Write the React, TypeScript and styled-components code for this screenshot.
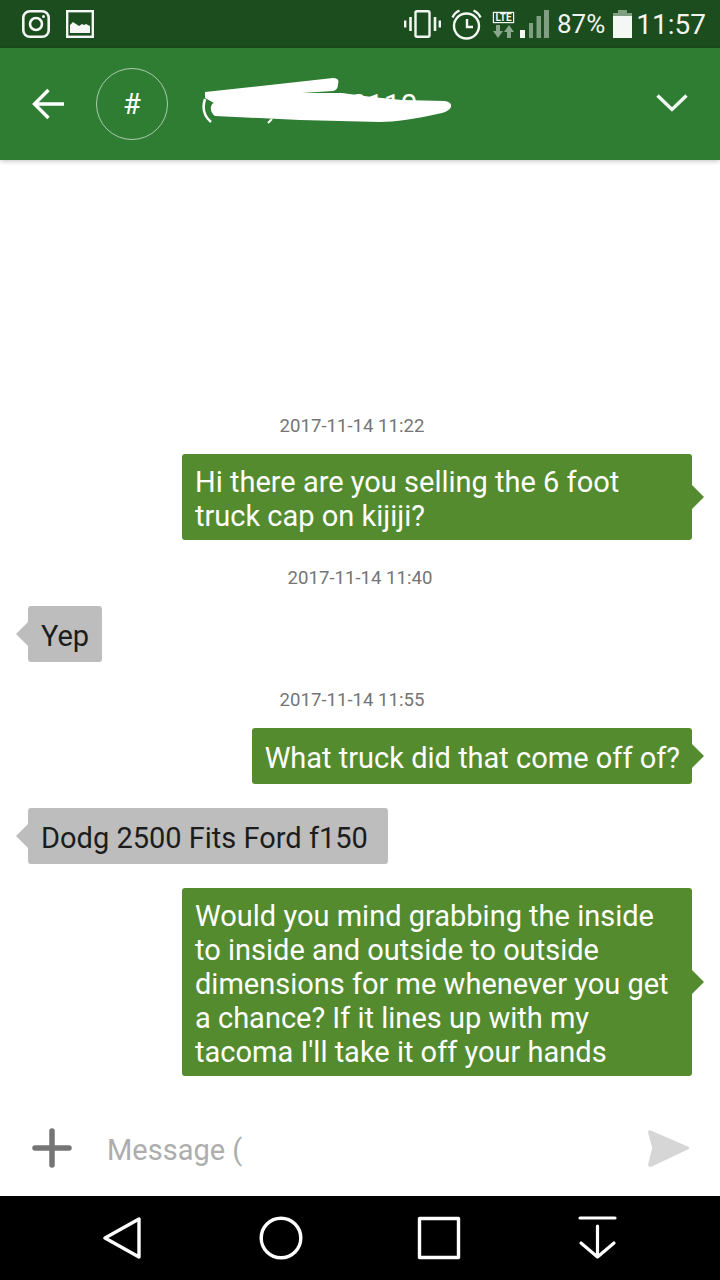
import styled, { createGlobalStyle } from 'styled-components';

const Global = createGlobalStyle`
  html, body {
    margin: 0;
    padding: 0;
    background: #fff;
  }
  * {
    box-sizing: border-box;
  }
`;

const Screen = styled.div`
  width: 720px;
  height: 1280px;
  display: flex;
  flex-direction: column;
  overflow: hidden;
  font-family: Roboto, 'Liberation Sans', sans-serif;
`;

const StatusBar = styled.div`
  height: 48px;
  flex: none;
  display: flex;
  align-items: center;
  padding: 0 14px 0 22px;
  background: #1b4d1e;
  color: #f1f5f1;
`;

const StatusLeft = styled.div`
  display: flex;
  align-items: center;
  gap: 16px;
  flex: 1;
`;

const StatusRight = styled.div`
  display: flex;
  align-items: center;
`;

const Percent = styled.span`
  font-size: 26px;
  margin: 0 8px 0 8px;
`;

const Clock = styled.span`
  font-size: 28px;
  margin-left: 4px;
`;

const Header = styled.header`
  height: 112px;
  flex: none;
  display: flex;
  align-items: center;
  padding: 0 32px;
  background: #2e7d32;
  box-shadow: 0 1px 5px rgba(0, 0, 0, 0.25);
  position: relative;
  z-index: 1;
`;

const Avatar = styled.div`
  width: 72px;
  height: 72px;
  margin: 0 34px 0 32px;
  flex: none;
  display: flex;
  align-items: center;
  justify-content: center;
  border: 1px solid rgba(255, 255, 255, 0.6);
  border-radius: 50%;
  color: #fff;
  font-size: 29px;
`;

const Name = styled.div`
  flex: 1;
  height: 60px;
  position: relative;
  display: flex;
  align-items: center;
  padding-left: 148px;
  color: #fff;
  font-size: 30px;
`;

const Scribble = styled.svg`
  position: absolute;
  left: 0;
  top: 0;
`;

const Messages = styled.main`
  flex: 1;
  min-height: 0;
  display: flex;
  flex-direction: column;
  justify-content: flex-end;
  padding: 0 28px 28px;
  background: #fff;
`;

const Stamp = styled.div<{ $shift?: boolean }>`
  height: 24px;
  margin: 25px 0 17px;
  padding-right: ${(p) => (p.$shift ? 16 : 0)}px;
  text-align: center;
  font-size: 18.6px;
  line-height: 27px;
  color: #757575;
`;

const Bubble = styled.div<{ $mine?: boolean; $trail?: number }>`
  position: relative;
  max-width: 510px;
  min-height: 56px;
  display: flex;
  align-items: center;
  padding: 11px ${(p) => p.$trail ?? 13}px 7px 13px;
  border-radius: 3px;
  font-size: 29px;
  line-height: 34px;
  align-self: ${(p) => (p.$mine ? 'flex-end' : 'flex-start')};
  background: ${(p) => (p.$mine ? '#558b2f' : '#bdbdbd')};
  color: ${(p) => (p.$mine ? '#fff' : '#1c1c1c')};

  & + & {
    margin-top: 24px;
  }

  &::after {
    content: '';
    position: absolute;
    top: 50%;
    transform: translateY(-50%);
    border-style: solid;
    border-color: transparent;
    border-width: 12px;
    ${(p) =>
      p.$mine
        ? 'left: 100%; border-right-width: 0; border-left-color: #558b2f;'
        : 'right: 100%; border-left-width: 0; border-right-color: #bdbdbd;'}
  }
`;

const InputBar = styled.div`
  height: 92px;
  flex: none;
  display: flex;
  align-items: center;
  padding: 0 30px 0 32px;
  background: #fff;
`;

const Placeholder = styled.div`
  flex: 1;
  margin-left: 35px;
  font-size: 29px;
  color: #adadad;
`;

const NavBar = styled.nav`
  height: 84px;
  flex: none;
  display: grid;
  grid-template-columns: repeat(4, 158.5px);
  padding-left: 43px;
  align-items: center;
  background: #000;
`;

const NavSlot = styled.div`
  display: flex;
  justify-content: center;
`;

const InstagramIcon = () => (
  <svg width="28" height="28" viewBox="0 0 28 28" fill="none" stroke="#f4f7f4" strokeWidth="2.6">
    <rect x="1.3" y="1.3" width="25.4" height="25.4" rx="6.5" />
    <circle cx="14" cy="14" r="6" />
    <circle cx="21.5" cy="6.5" r="1.5" fill="#f4f7f4" stroke="none" />
  </svg>
);

const ImageIcon = () => (
  <svg width="28" height="28" viewBox="0 0 28 28">
    <rect x="1.2" y="1.2" width="25.6" height="25.6" fill="none" stroke="#f4f7f4" strokeWidth="2.4" />
    <path d="M4 23V15l3-3 3 2 3 2 3-2 2 1 2-1 4 2v7z" fill="#f4f7f4" />
  </svg>
);

const VibrateIcon = () => (
  <svg width="37" height="28" viewBox="0 0 37 28" fill="none" stroke="#f4f7f4">
    <rect x="11.5" y="1.2" width="14" height="25.6" rx="1.5" strokeWidth="2.4" />
    <path d="M6.5 7v14M31 7v14" strokeWidth="2.6" />
    <path d="M1.2 10.5v7M35.8 10.5v7" strokeWidth="2.4" />
  </svg>
);

const AlarmIcon = () => (
  <svg width="31" height="31" viewBox="0 0 31 31" fill="none" stroke="#f4f7f4" strokeWidth="2.4" style={{ marginLeft: 10 }}>
    <circle cx="15.5" cy="17" r="12.5" />
    <path d="M16 10v8h6" />
    <path d="M1.5 8.5C3 5 5.5 2.8 8.5 1.5M22.5 1.5c3 1.3 5.500 3.500 7 7" />
  </svg>
);

const LteIcon = () => (
  <svg width="23" height="27" viewBox="0 0 23 27" style={{ marginLeft: 10 }}>
    <rect x="0.8" y="0.8" width="21.4" height="11.4" fill="#f4f7f4" />
    <rect x="2" y="2" width="19" height="9" fill="#1b4d1e" />
    <text x="11.5" y="10.2" textAnchor="middle" fontFamily="Roboto, sans-serif" fontSize="10" fontWeight="700" fill="#f4f7f4">
      LTE
    </text>
    <path d="M4 14v6H1l5 7 5-7H8v-6zM17 14l-5 7h3v6h4v-6h3z" fill="#8aa88b" />
  </svg>
);

const SignalIcon = () => (
  <svg width="29" height="28" viewBox="0 0 29 28" style={{ marginLeft: 5 }}>
    <rect x="0" y="20" width="5" height="8" fill="#f4f7f4" />
    <rect x="9" y="13" width="4" height="15" fill="#7f9f80" />
    <rect x="16.500" y="6" width="4.500" height="22" fill="#7f9f80" />
    <rect x="24" y="0" width="5" height="28" fill="#7f9f80" />
  </svg>
);

const BatteryIcon = () => (
  <svg width="19" height="28" viewBox="0 0 19 28">
    <path d="M5 0h9v3H5z" fill="#7f9f80" />
    <path d="M0 3h19v3H0z" fill="#7f9f80" />
    <rect x="0" y="6" width="19" height="22" fill="#f4f7f4" />
  </svg>
);

const BackIcon = () => (
  <svg width="32" height="32" viewBox="0 0 32 32" fill="none" stroke="#fff" strokeWidth="3.4">
    <path d="M32 16H3M16.500 2L2.500 16l14 14" />
  </svg>
);

const ChevronIcon = () => (
  <svg width="32" height="18" viewBox="0 0 32 18" fill="none" stroke="#f2f7f2" strokeWidth="3.4" style={{ marginTop: -2 }}>
    <path d="M1.500 1.500L16 15.500 30.500 1.500" />
  </svg>
);

const ScribbleMark = () => (
  <Scribble width="252" height="60" viewBox="0 0 252 60">
    <path
      d="M3 18L131 4Q138 4 136 10Q136 16 131 17L100 19L140 19L170 23L200 26L243 27Q250 28 249 33Q247 37 240 39Q200 48 178 48L98 46L13 42Q8 38 9 33Q10 29 12 29L3 24Z"
      fill="#fff"
    />
    <path d="M3 25C0 34 2 42 9 48" stroke="#fff" strokeWidth="2.500" fill="none" />
    <path d="M70 45L66 49" stroke="#fff" strokeWidth="2" fill="none" />
  </Scribble>
);

const PlusIcon = () => (
  <svg width="40" height="40" viewBox="0 0 40 40" stroke="#757575" strokeWidth="5.500" strokeLinecap="round" style={{ marginTop: -4 }}>
    <path d="M20 3v34M3 20h34" />
  </svg>
);

const SendIcon = () => (
  <svg width="42" height="40" viewBox="0 0 42 40" style={{ marginTop: -4 }}>
    <path d="M2 3L40 19.500Q41 20 40 20.500L3 38Q0.500 38.500 1 36L5 20 1 5Q0.500 2.500 2 3Z" fill="#d6d6d6" stroke="#d6d6d6" strokeWidth="1.500" strokeLinejoin="round" />
  </svg>
);

const NavBackIcon = () => (
  <svg width="38" height="44" viewBox="0 0 38 44" fill="none" stroke="#fff" strokeWidth="3.4" strokeLinejoin="round">
    <path d="M36 3v38L2 22z" />
  </svg>
);

const NavHomeIcon = () => (
  <svg width="44" height="44" viewBox="0 0 44 44" fill="none" stroke="#fff" strokeWidth="3.4">
    <circle cx="22" cy="22" r="19.800" />
  </svg>
);

const NavRecentIcon = () => (
  <svg width="44" height="44" viewBox="0 0 44 44" fill="none" stroke="#fff" strokeWidth="3.4" strokeLinejoin="round">
    <rect x="2.500" y="2.500" width="39" height="39" />
  </svg>
);

const NavHideIcon = () => (
  <svg width="40" height="44" viewBox="0 0 40 44" fill="none" stroke="#fff" strokeWidth="3.200" strokeLinecap="round" strokeLinejoin="round">
    <path d="M2 2h35M19.500 10v31M3 27l16.500 14L36 27" />
  </svg>
);

export default function App() {
  return (
    <Screen>
      <Global />
      <StatusBar>
        <StatusLeft>
          <InstagramIcon />
          <ImageIcon />
        </StatusLeft>
        <StatusRight>
          <VibrateIcon />
          <AlarmIcon />
          <LteIcon />
          <SignalIcon />
          <Percent>87%</Percent>
          <BatteryIcon />
          <Clock>11:57</Clock>
        </StatusRight>
      </StatusBar>
      <Header>
        <BackIcon />
        <Avatar>#</Avatar>
        <Name>
          0110
          <ScribbleMark />
        </Name>
        <ChevronIcon />
      </Header>
      <Messages>
        <Stamp $shift>2017-11-14 11:22</Stamp>
        <Bubble $mine>Hi there are you selling the 6 foot truck cap on kijiji?</Bubble>
        <Stamp>2017-11-14 11:40</Stamp>
        <Bubble>Yep</Bubble>
        <Stamp $shift>2017-11-14 11:55</Stamp>
        <Bubble $mine $trail={12}>What truck did that come off of?</Bubble>
        <Bubble $trail={20}>Dodg 2500 Fits Ford f150</Bubble>
        <Bubble $mine>
          Would you mind grabbing the inside to inside and outside to outside dimensions for me whenever you get a chance? If it lines up with my tacoma I'll take it off your hands
        </Bubble>
      </Messages>
      <InputBar>
        <PlusIcon />
        <Placeholder>Message (</Placeholder>
        <SendIcon />
      </InputBar>
      <NavBar>
        <NavSlot>
          <NavBackIcon />
        </NavSlot>
        <NavSlot>
          <NavHomeIcon />
        </NavSlot>
        <NavSlot>
          <NavRecentIcon />
        </NavSlot>
        <NavSlot>
          <NavHideIcon />
        </NavSlot>
      </NavBar>
    </Screen>
  );
}
